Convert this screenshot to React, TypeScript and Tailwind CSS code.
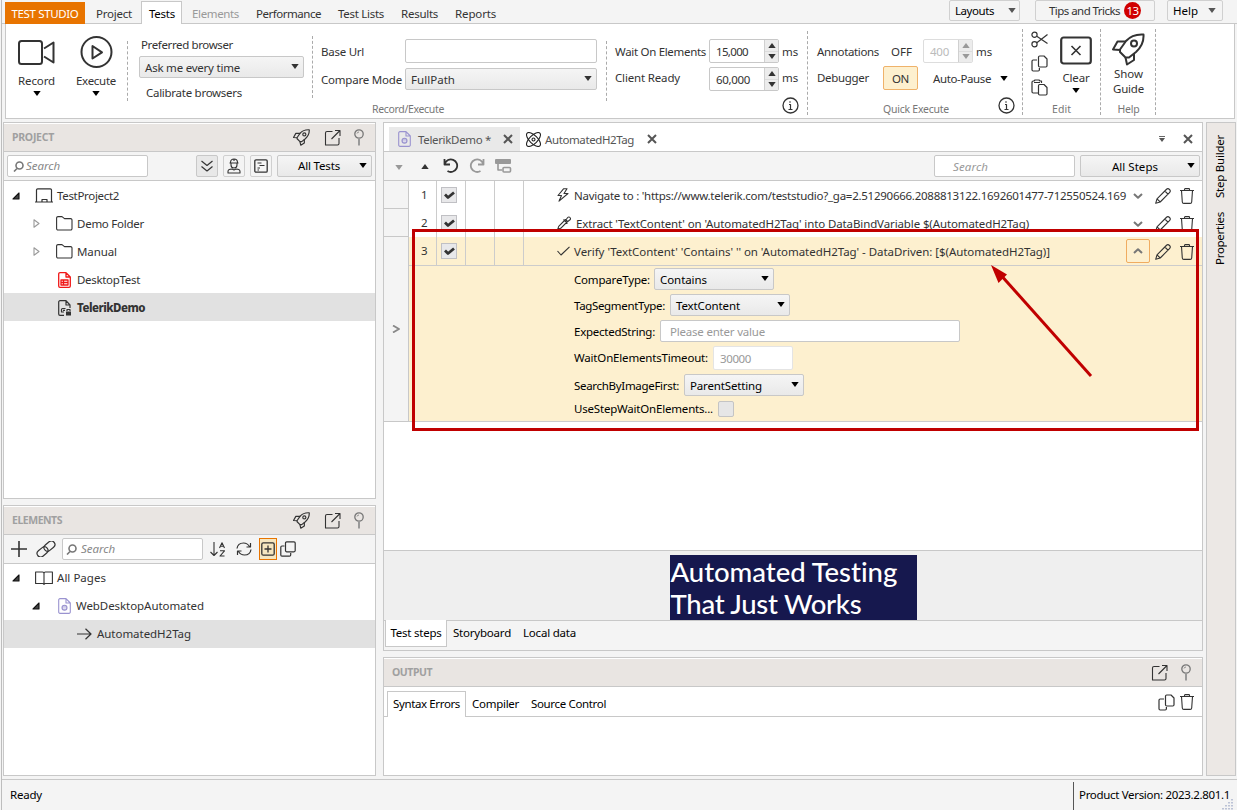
import React from 'react';

const ctx = document.createElement('canvas').getContext('2d')!;

type LabelProps = {
  children: string;
  w: number;
  size?: number;
  weight?: number;
  italic?: boolean;
  family?: string;
  className?: string;
};

// One line of text, tracked so that it fills w pixels
const T: React.FC<LabelProps> = ({ children, w, size = 11.5, weight = 400, italic = false, family = 'Noto Sans', className = '' }) => {
  const fontFamily = `"${family}", "Open Sans", sans-serif`;
  ctx.font = `${italic ? 'italic ' : ''}${weight} ${size}px ${fontFamily}`;
  const letterSpacing = (w + 1 - ctx.measureText(children).width) / children.length;
  return (
    <span
      className={`block shrink-0 whitespace-pre leading-4 ${className}`}
      style={{ fontFamily, fontSize: size, fontWeight: weight, fontStyle: italic ? 'italic' : 'normal', letterSpacing }}
    >
      {children}
    </span>
  );
};

type SvgProps = { w?: number; h?: number; vb?: string; sw?: number; className?: string; children: React.ReactNode };

const Svg: React.FC<SvgProps> = ({ w = 16, h = 16, vb, sw = 1.1, className = '', children }) => (
  <svg
    width={w}
    height={h}
    viewBox={vb ?? `0 0 ${w} ${h}`}
    fill="none"
    stroke="currentColor"
    strokeWidth={sw}
    strokeLinejoin="round"
    className={`block shrink-0 ${className}`}
  >
    {children}
  </svg>
);

const Down = ({ className = '' }) => (
  <Svg w={8} h={5} className={className}>
    <path d="M0.3 0h7.4L4 5Z" fill="currentColor" stroke="none" />
  </Svg>
);

const Up = ({ className = '' }) => (
  <Svg w={8} h={5} className={className}>
    <path d="M0.3 5h7.4L4 0Z" fill="currentColor" stroke="none" />
  </Svg>
);

const Rocket = ({ size = 16, sw = 2.3, className = '' }) => (
  <Svg w={size} h={size} vb="0 0 33 33" sw={sw} className={className}>
    <path d="M31.5 1.5C24 1 18 3.5 14 8L8 16.5V19l5.5 5.5H17l7-5.5C29.5 14 32 9 31.5 1.5Z" />
    <path d="M14 8.5H5.500L1 16.500l7 .5M13.500 24.500l1.500 7 7-4.500v-7" />
    <circle cx="22" cy="10.500" r="3" />
  </Svg>
);

const Popout = () => (
  <Svg w={17} h={17} sw={1.1}>
    <path d="M8.500 2.500H3a1.500 1.500 0 0 0-1.500 1.500v12h12a1.500 1.500 0 0 0 1.500-1.500V9M7.500 10l8.500-8.500M11 1.500h5v5.500" />
  </Svg>
);

const Pin = () => (
  <Svg w={10} h={17} className="text-[#777]">
    <circle cx="5" cy="5" r="4.200" strokeWidth="1.300" />
    <path d="M5 9.500V16.500" stroke="#999" strokeWidth="2" />
    <path d="M3 4.500a2 2 0 0 1 2-1.500" strokeWidth=".8" />
  </Svg>
);

const Magnifier = () => (
  <Svg w={11} h={11} sw={1.6} className="text-[#777]">
    <circle cx="6.500" cy="4.500" r="3.500" />
    <path d="M4 7.500L1 10.500" />
  </Svg>
);

const Folder = () => (
  <Svg w={17} h={15} sw={1.1}>
    <path d="M.6 3V2A1.400 1.400 0 0 1 2 .6h4l2.500 2h6A1.400 1.400 0 0 1 16 4v8.500A1.400 1.400 0 0 1 14.600 14H2A1.400 1.400 0 0 1 .6 12.500Z" />
  </Svg>
);

const PageIcon = ({ className = '' }) => (
  <Svg w={13} h={16} sw={1.1} className={className}>
    <path d="M8 .6H2A1.300 1.300 0 0 0 .7 2v12A1.300 1.300 0 0 0 2 15.400h9A1.300 1.300 0 0 0 12.300 14V5L8 .6V5h4" />
    <circle cx="6.500" cy="9.700" r="2.500" fill="currentColor" fillOpacity=".6" />
    <path d="M5 9.200h3M5 10.500h3" stroke="#fff" strokeWidth=".5" />
  </Svg>
);

const Pencil = () => (
  <Svg sw={1.1}>
    <path d="M.7 15.300L2 10.800 11.300 1.500a2.200 2.200 0 0 1 3.200 3.200L5.200 14ZM2 10.800L5.200 14M9.800 3L13 6.200" />
  </Svg>
);

const Trash = () => (
  <Svg w={14} h={16} sw={1.1}>
    <path d="M0 2.500h14M4.500 2.500V1.300Q4.500.6 5.200.6h3.600q.7 0 .7.7v1.200M1.500 2.500L2.300 14q.1 1.400 1.500 1.400h6.400q1.400 0 1.500-1.400l.8-11.500" />
  </Svg>
);

const Copy = () => (
  <Svg w={17} h={17} sw={1.2}>
    <path d="M6 5H2.200A1.200 1.200 0 0 0 1 6.200v8.600A1.200 1.200 0 0 0 2.200 16h5A1.200 1.200 0 0 0 8.400 14.800V13" />
    <path d="M8.700 1H13l3 3v6.800a1.200 1.200 0 0 1-1.200 1.200H8.700a1.200 1.200 0 0 1-1.200-1.200V2.200A1.200 1.200 0 0 1 8.700 1Z" />
  </Svg>
);

const Info = () => (
  <Svg w={17} h={17} sw={1.3}>
    <circle cx="8.500" cy="8.500" r="7.500" />
    <path d="M7 7.500h1.500v5M6.500 12.500h4M8 4.200v1.500" strokeWidth="1.200" />
  </Svg>
);

const Cross = () => (
  <Svg w={10} h={10} sw={2} className="text-[#555]">
    <path d="M1 1l8 8M9 1L1 9" />
  </Svg>
);

const Check = () => (
  <span className="flex h-4 w-4 shrink-0 items-center justify-center border border-[#c0c0c4] bg-[#e8e8ea] text-[#333]">
    <Svg w={11} h={9} sw={2.8}>
      <path d="M1 3.500l3 3L10 1.500" />
    </Svg>
  </span>
);

const Dashes = ({ className = '' }) => <div className={`w-px shrink-0 border-l border-dashed border-[#aaa] ${className}`} />;

const Collapse = () => (
  <Svg w={8} h={8}>
    <path d="M7 1v6H1Z" fill="#444" stroke="#111" />
  </Svg>
);

const Expand = () => (
  <Svg w={7} h={9} className="text-[#999]">
    <path d="M1 .8v7.400L6 4.500Z" />
  </Svg>
);

const Select = ({ text, w, className = '' }: { text: string; w: number; className?: string }) => (
  <div
    className={`flex h-[22px] shrink-0 items-center justify-between rounded-xs border border-[#c8c8c8] bg-linear-to-b from-[#f5f5f5] to-[#e9e9e9] pl-[5px] pr-1 ${className}`}
  >
    <T w={w} className="mt-px">{text}</T>
    <Down className="mb-px" />
  </div>
);

const Spinner = ({ value, w, className = '', dim = false }: { value: string; w: number; className?: string; dim?: boolean }) => (
  <div className={`flex h-6 shrink-0 items-center rounded-xs border bg-white ${dim ? 'border-[#ddd] text-[#bbb]' : 'border-[#c8c8c8]'} ${className}`}>
    <T w={w} className="ml-[6px] mt-0.5">{value}</T>
    <div className={`ml-auto flex h-full w-[14px] flex-col items-center justify-evenly border-l border-[#d0d0d0] bg-[#ececec] ${dim ? 'text-[#999]' : ''}`}>
      <Up />
      <span className="h-px w-full bg-[#dcdcdc]" />
      <Down />
    </div>
  </div>
);

const PanelHeader = ({ title, w, rocket = true }: { title: string; w: number; rocket?: boolean }) => (
  <div className="flex h-[29px] shrink-0 items-center border-b border-[#c8c8c8] bg-[#e9e5e2] pl-2 pr-[11px] text-[#333] shadow-[inset_0_1px_0_#fff]">
    <T w={w} size={10.5} weight={700} className="text-[#a0a0a0]">{title}</T>
    <div className="ml-auto flex items-center">
      {rocket && <Rocket size={17} className="mr-[14px]" />}
      <Popout />
      <span className="w-[13px]" />
      <Pin />
    </div>
  </div>
);

const Ribbon = () => (
  <div className="ml-[3px] mr-[2px] flex h-[95px] shrink-0 border border-[#c8c8c8] border-t-0 bg-white pt-px text-[#333]">
    {/* Record / Execute */}
    <div className="flex w-[121px] shrink-0 pt-[11px]">
      <div className="flex w-[61px] flex-col items-center">
        <Svg w={37} h={32} sw={2}>
          <rect x="1" y="5" width="23" height="23" rx="2.500" />
          <path d="M26 12.500L35.500 6.500v20L26 20.500" />
        </Svg>
        <T w={36} className="mt-[5px]">Record</T>
        <Down className="mt-0.5 text-black" />
      </div>
      <div className="flex w-[58px] flex-col items-center">
        <Svg w={33} h={32} sw={2}>
          <circle cx="16.500" cy="16" r="15" />
          <path d="M12.500 10v12.500l9.500-6.200Z" />
        </Svg>
        <T w={39} className="mt-[5px]">Execute</T>
        <Down className="mt-0.5 text-black" />
      </div>
    </div>
    <Dashes className="mt-4 h-[60px]" />

    {/* Browser */}
    <div className="w-[184px] shrink-0 pl-[11px] pt-3">
      <T w={91} className="ml-0.5">Preferred browser</T>
      <Select text="Ask me every time" w={94} className="mt-[3px] w-[165px]" />
      <T w={95} className="ml-[7px] mt-[7px]">Calibrate browsers</T>
    </div>
    <Dashes className="mt-[11px] h-[62px]" />

    <div className="w-[293px] shrink-0 pl-2 pt-[14px]">
      <div className="flex h-6 items-center">
        <T w={42} className="mt-0.5">Base Url</T>
        <div className="ml-[41px] h-6 w-[192px] rounded-xs border border-[#c8c8c8]" />
      </div>
      <div className="mt-[5px] flex h-[22px] items-center">
        <T w={80} className="mt-0.5">Compare Mode</T>
        <Select text="FullPath" w={43} className="ml-[3px] w-[192px]" />
      </div>
      <T w={71} size={10.5} className="ml-[51px] mt-[11px] text-[#777]">Record/Execute</T>
    </div>
    <Dashes className="mt-4 h-[60px]" />

    {/* Timeouts */}
    <div className="w-[200px] shrink-0 pl-2 pt-[14px]">
      <div className="flex h-6 items-center">
        <T w={90} className="mt-0.5">Wait On Elements</T>
        <Spinner value="15,000" w={31} className="ml-[3px] w-[70px]" />
        <T w={15} className="ml-[3px] mt-0.5">ms</T>
      </div>
      <div className="mt-1 flex h-6 items-center">
        <T w={64} className="-mt-0.5">Client Ready</T>
        <Spinner value="60,000" w={33} className="ml-[29px] w-[70px]" />
        <T w={15} className="-mt-0.5 ml-[3px]">ms</T>
      </div>
      <div className="ml-[167px] mt-[6px]">
        <Info />
      </div>
    </div>
    <Dashes className="mt-[6px] h-[84px]" />

    {/* Quick execute */}
    <div className="w-[214px] shrink-0 pl-[9px] pt-[14px]">
      <div className="flex h-6 items-center">
        <T w={61} className="mt-0.5">Annotations</T>
        <T w={20} className="ml-3 mt-0.5">OFF</T>
        <Spinner value="400" w={18} dim className="ml-[11px] w-[50px]" />
        <T w={15} className="ml-[3px] mt-0.5">ms</T>
      </div>
      <div className="mt-[3px] flex h-6 items-center">
        <T w={51}>Debugger</T>
        <div className="ml-[14px] flex h-6 w-[35px] items-center justify-center rounded-xs border border-[#efb26a] bg-[#fdf0cf]">
          <T w={16} className="mt-px">ON</T>
        </div>
        <T w={57} className="ml-[15px] mt-0.5">Auto-Pause</T>
        <Down className="ml-[9px] text-black" />
      </div>
      <div className="mt-[7px] flex">
        <T w={65} size={10.5} className="ml-[66px] mt-1 text-[#777]">Quick Execute</T>
        <div className="ml-[49px]">
          <Info />
        </div>
      </div>
    </div>
    <Dashes className="mt-1 h-[86px]" />

    {/* Edit */}
    <div className="w-[77px] shrink-0 pt-[6px]">
      <div className="flex h-[70px]">
        <div className="ml-2 flex w-[17px] flex-col gap-[7px]">
          <Svg w={17} h={17} sw={1.2}>
            <circle cx="3.500" cy="3.800" r="2.600" />
            <circle cx="3.500" cy="13.200" r="2.600" />
            <path d="M5.800 5.200L16.500 12.500M5.800 11.800L16.500 3.500" />
          </Svg>
          <Copy />
          <Svg w={17} h={17} sw={1.2}>
            <path d="M7 14H2.200A1.200 1.200 0 0 1 1 12.800V3.200A1.200 1.200 0 0 1 2.200 2H3l1-1h4l1 1h1.500V4M3 3.500h6M8.700 5.500H13l3 3v6.300a1.200 1.200 0 0 1-1.200 1.200H8.700a1.200 1.200 0 0 1-1.200-1.200V6.700A1.200 1.200 0 0 1 8.700 5.500Z" />
          </Svg>
        </div>
        <div className="ml-3 flex w-8 flex-col items-center pt-[5px]">
          <Svg w={32} h={29} sw={2.2}>
            <rect x="1.200" y="1.500" width="29.600" height="26" rx="2.500" />
            <path d="M11.500 10l9 9M20.500 10l-9 9" strokeWidth="1.600" />
          </Svg>
          <T w={26} className="mt-[5px]">Clear</T>
          <Down className="mt-0.5 text-black" />
        </div>
      </div>
      <T w={18} size={10.5} className="ml-[29px] text-[#777]">Edit</T>
    </div>
    <Dashes className="mt-1 h-[86px]" />

    <div className="flex w-[54px] shrink-0 flex-col items-center pl-px pt-2">
      <Rocket size={33} sw={2} />
      <T w={28}>Show</T>
      <T w={30} className="-mt-px">Guide</T>
      <T w={21} size={10.5} className="mt-1 text-[#777]">Help</T>
    </div>
    <Dashes className="mt-1 h-[86px]" />
  </div>
);

const TopBar = () => (
  <div className="flex h-6 shrink-0 border-b border-[#c8c8c8] pl-[3px] text-[#333]">
    <div className="mt-0.5 flex h-[22px] w-20 items-center justify-center bg-[#e87400] text-white">
      <T w={66} className="mt-px">TEST STUDIO</T>
    </div>
    <T w={35} className="ml-[11px] mt-[6px]">Project</T>
    <div className="ml-[9px] mt-px flex h-6 w-[41px] justify-center border border-b-0 border-[#c8c8c8] bg-white pl-px">
      <T w={25} className="mt-1 text-black">Tests</T>
    </div>
    <T w={46} className="ml-[10px] mt-[6px] text-[#999]">Elements</T>
    <T w={64} className="ml-[17px] mt-[6px]">Performance</T>
    <T w={45} className="ml-[17px] mt-[6px]">Test Lists</T>
    <T w={36} className="ml-[17px] mt-[6px]">Results</T>
    <T w={40} className="ml-[17px] mt-[6px]">Reports</T>
    <div className="ml-auto mr-[14px] flex text-black">
      <div className="flex h-[21px] w-[71px] items-center rounded-xs border border-[#d0d0d0] pl-[5px]">
        <T w={38} className="mt-px">Layouts</T>
        <Down className="ml-[14px] text-[#555]" />
      </div>
      <div className="ml-[15px] flex h-[21px] w-[120px] items-center rounded-xs border border-[#d0d0d0] pl-[13px] text-[#333]">
        <T w={70}>Tips and Tricks</T>
        <span className="ml-1 flex h-[17px] w-[17px] items-center justify-center rounded-full bg-[#d00000] text-white">
          <T w={11} className="mt-px">13</T>
        </span>
      </div>
      <div className="ml-3 flex h-[21px] w-14 items-center rounded-xs border border-[#d0d0d0] pl-[5px]">
        <T w={24} className="mt-px">Help</T>
        <Down className="ml-[10px] text-[#555]" />
      </div>
    </div>
  </div>
);

const ProjectPanel = () => (
  <div className="flex h-[377px] flex-col border border-[#c8c8c8] bg-white text-[#333]">
    <PanelHeader title="PROJECT" w={41} />
    <div className="flex h-[29px] shrink-0 items-center border-b border-[#c8c8c8] bg-[#f4f4f4] pl-[3px] pr-[3px]">
      <div className="flex h-[22px] w-[141px] items-center rounded-xs border border-[#c8c8c8] bg-white pl-[5px]">
        <Magnifier />
        <T w={33} italic className="ml-[2px] text-[#888]">Search</T>
      </div>
      <div className="ml-auto flex gap-[5px]">
        <div className="flex h-[22px] w-[22px] items-center justify-center rounded-xs border border-[#c8c8c8] bg-[#e8e8e8]">
          <Svg w={12} h={12} sw={1.2}>
            <path d="M0.500 1L6 5.500 11.500 1M.5 6.500L6 11l5.500-4.500" />
          </Svg>
        </div>
        <div className="flex h-[22px] w-[22px] items-center justify-center rounded-xs border border-[#d0d0d0]">
          <Svg w={14} h={16}>
            <path d="M2.500 5h9M3.500 4.500C3.500 2.500 5 1 7 1s3.500 1.500 3.500 3.500M7 1v2M4 5.500v1.500a3 3 0 0 0 6 0V5.500M1 15v-1.500C1 11.500 3 11 5 11l2 1 2-1c2 0 4 .5 4 2.500V15Z" />
          </Svg>
        </div>
        <div className="flex h-[22px] w-[22px] items-center justify-center rounded-xs border border-[#d0d0d0]">
          <Svg w={14} h={14} sw={1.3}>
            <rect x=".8" y=".8" width="12.400" height="12.400" rx="1.200" />
            <path d="M3.500 4h4M5.500 6.500h5M3.500 9h2.500M3.500 11h1.500" strokeWidth="1" />
          </Svg>
        </div>
        <div className="flex h-[22px] w-[95px] items-center rounded-xs border border-[#c8c8c8] bg-linear-to-b from-[#f5f5f5] to-[#e9e9e9] pl-5 text-black">
          <T w={41}>All Tests</T>
          <Down className="mb-0.5 ml-[19px]" />
        </div>
      </div>
    </div>
    <div className="flex h-7 items-center pl-2 pt-px">
      <Collapse />
      <Svg w={18} h={15} className="ml-[15px]" sw={1.2}>
        <path d="M0 14h18M1.500 14V2Q1.500.8 2.700.8h12.600q1.200 0 1.200 1.200v12M7 14v-2.500h5V14" />
      </Svg>
      <T w={61} className="ml-[4px]">TestProject2</T>
    </div>
    {[['Demo Folder', 66], ['Manual', 39]].map(([name, w]) => (
      <div key={name} className="flex h-7 items-center pl-[29px] pt-px">
        <Expand />
        <span className="w-4" />
        <Folder />
        <T w={w as number} className="ml-1">{name as string}</T>
      </div>
    ))}
    <div className="flex h-7 items-center pl-[54px] pt-px">
      <Svg w={13} h={16} sw={1.3} className="text-[#f01818]">
        <path d="M8 .7H2A1.300 1.300 0 0 0 .7 2v12A1.300 1.300 0 0 0 2 15.300h9A1.300 1.300 0 0 0 12.300 14V5L8 .7V5h4M3 8h7v5H3ZM3 10.500h7M5.500 8v5" />
      </Svg>
      <T w={62} className="ml-[6px]">DesktopTest</T>
    </div>
    <div className="flex h-7 items-center bg-[#e1e1e1] pl-[54px] pt-px">
      <Svg w={13} h={16} sw={1.2}>
        <path d="M6 15.300H2A1.300 1.300 0 0 1 .7 14V2A1.300 1.300 0 0 1 2 .7h6L12 5v3M8 .7V5h4M7.500 8.500H4.500a1 1 0 0 0-1 1V12h2.500M5 10.300h2" />
        <rect x="8" y="11.500" width="5" height="4" fill="currentColor" stroke="none" />
        <path d="M9 11V9.500h3V11" />
      </Svg>
      <T w={67} weight={800} className="ml-[6px]">TelerikDemo</T>
    </div>
  </div>
);

const ElementsPanel = () => (
  <div className="mt-[6px] flex h-[271px] flex-col border border-[#c8c8c8] bg-white text-[#333]">
    <PanelHeader title="ELEMENTS" w={49} />
    <div className="flex h-[29px] shrink-0 items-center border-b border-[#c8c8c8] bg-[#f4f4f4] pl-[7px]">
      <Svg sw={1.6}>
        <path d="M8 0v16M0 8h16" />
      </Svg>
      <Svg w={20} h={16} className="ml-[9px]" sw={1.2}>
        <g transform="rotate(-40 10 8)">
          <rect x="-.5" y="4.500" width="12" height="7" rx="3.500" />
          <rect x="8.500" y="4.500" width="12" height="7" rx="3.500" />
        </g>
      </Svg>
      <div className="ml-[6px] flex h-[22px] w-[141px] items-center rounded-xs border border-[#c8c8c8] bg-white pl-[3px]">
        <Magnifier />
        <T w={33} italic className="ml-1 text-[#888]">Search</T>
      </div>
      <Svg w={16} h={15} className="ml-[7px]">
        <path d="M4 0v13.500M.5 10L4 13.500 7.500 10" />
        <path d="M9.500 6L12 .8 14.500 6M10.300 4.300h3.400M10 8.800h4.500L10 14h4.500" />
      </Svg>
      <Svg w={16} h={14} className="ml-[10px]" sw={1.2}>
        <path d="M1 6.500C1.500 3 4 1 7.500 1c2.500 0 4.500 1 6 3.500M14.500 1v4h-4M15 7.500C14.500 11 12 13 8.500 13c-2.500 0-4.500-1-6-3.500M1.500 13V9h4" />
      </Svg>
      <div className="ml-[7px] flex h-[22px] w-[18px] items-center justify-center border border-[#e87400] bg-[#f5e6c0]">
        <Svg w={14} h={14} sw={1.3}>
          <rect x=".8" y=".8" width="12.400" height="12.400" rx="1.500" />
          <path d="M7 3.500v7M3.500 7h7" strokeWidth="1.300" />
        </Svg>
      </div>
      <Svg className="ml-[3px]" sw={1.2}>
        <path d="M4.500 5H2A1.200 1.200 0 0 0 .8 6.200V14A1.200 1.200 0 0 0 2 15.200h7.500a1.200 1.200 0 0 0 1.200-1.200V12" />
        <rect x="5.500" y=".8" width="9.700" height="10" rx="1.200" />
      </Svg>
    </div>
    <div className="flex h-7 items-center pl-2">
      <Collapse />
      <Svg w={18} h={14} className="ml-[15px]">
        <path d="M9 2.500Q9 1 7.500 1H.6v11.500h7Q9 12.500 9 13.500q0-1 1.400-1h7V1h-7Q9 1 9 2.500v11" />
      </Svg>
      <T w={48} className="ml-[4px]">All Pages</T>
    </div>
    <div className="flex h-7 items-center pl-7">
      <Collapse />
      <PageIcon className="ml-[18px] text-[#9a93d0]" />
      <T w={127} className="ml-[5px]">WebDesktopAutomated</T>
    </div>
    <div className="flex h-7 items-center bg-[#e1e1e1] pl-[73px]">
      <Svg w={15} h={12} sw={1.2}>
        <path d="M0 6h14M8.500.7L14 6l-5.500 5.300" />
      </Svg>
      <T w={93} className="ml-[5px]">AutomatedH2Tag</T>
    </div>
  </div>
);

const StepCells = ({ n }: { n: string }) => (
  <>
    <div className="flex h-full w-7 shrink-0 items-center border-r border-[#ccc] pl-3">
      <T w={7}>{n}</T>
    </div>
    <div className="flex h-full w-[29px] shrink-0 items-center border-r border-[#ccc] pl-1">
      <Check />
    </div>
    <div className="h-full w-[29px] shrink-0 border-r border-[#ccc]" />
    <div className="h-full w-[29px] shrink-0 border-r border-[#ccc]" />
  </>
);

const StepActions = ({ open = false }) => (
  <div className="ml-auto flex items-center pr-2 pt-px">
    <div className={`flex h-6 w-6 items-center justify-center text-[#777] ${open ? '-mt-0.5 rounded-xs border border-[#f0ac60]' : ''}`}>
      <Svg w={10} h={6} sw={2}>
        <path d={open ? 'M1 5L5 1.200 9 5' : 'M1 1l4 3.800L9 1'} />
      </Svg>
    </div>
    <span className="w-[5px]" />
    <Pencil />
    <span className="w-[9px]" />
    <Trash />
  </div>
);

const Field = ({ label, w, box, children, className = 'mt-1' }: { label: string; w: number; box: string; children: React.ReactNode; className?: string }) => (
  <div className={`flex items-center ${className}`}>
    <div className={`shrink-0 ${box}`}>
      <T w={w}>{label}</T>
    </div>
    {children}
  </div>
);

const StepsArea = () => (
  <div className="flex h-[369px] shrink-0">
    <div className="flex w-[25px] shrink-0 flex-col">
      <div className="h-7 shrink-0 border-b border-r border-[#c8c8c8] bg-[#f4f4f4]" />
      <div className="h-7 shrink-0 border-b border-r border-[#c8c8c8] bg-[#f4f4f4]" />
      <div className="flex h-[185px] shrink-0 items-center justify-center border-b border-r border-[#c8c8c8] bg-[#f4f4f4] text-[#888]">
        <Svg w={8} h={8} sw={1.8}>
          <path d="M1 .5l6 3.500L1 7.500" />
        </Svg>
      </div>
    </div>
    <div className="flex min-w-0 flex-1 flex-col">
      <div className="flex h-7 items-center text-[#333]">
        <StepCells n="1" />
        <Svg w={12} h={14} className="ml-[33px]">
          <path d="M6.500.8L1 7.500h3.500L2 13.200 11 5.500H7L10 .8Z" />
        </Svg>
        <T w={551} className="ml-[5px] mt-0.5">Navigate to : 'https://www.telerik.com/teststudio?_ga=2.51290666.2088813122.1692601477-712550524.169</T>
        <StepActions />
      </div>
      <div className="flex h-7 items-center text-[#333]">
        <StepCells n="2" />
        <Svg w={14} h={14} className="ml-[33px]">
          <path d="M.7 13.300l1-3L8.500 3.500l2 2L3.700 12.300ZM6.500 3.500l4 4M8.500 4.500l2.200-3a1.500 1.500 0 0 1 2.300 0 1.700 1.700 0 0 1 0 2.300L9.500 6.500" />
        </Svg>
        <T w={452} className="ml-[5px] mt-0.5">Extract 'TextContent' on 'AutomatedH2Tag' into DataBindVariable $(AutomatedH2Tag)</T>
        <StepActions />
      </div>
      <div className="flex h-[29px] items-center border-b border-[#ccc] bg-[#fdf0cf] text-[#333]">
        <StepCells n="3" />
        <Svg w={13} h={10} className="ml-[33px]">
          <path d="M.5 5L4 9 12.500.8" />
        </Svg>
        <T w={475} className="ml-1 mt-0.5">Verify 'TextContent' 'Contains' '' on 'AutomatedH2Tag' - DataDriven: [$(AutomatedH2Tag)]</T>
        <StepActions open />
      </div>
      <div className="h-[156px] border-b border-[#ccc] bg-[#fdf0cf] pl-[165px] pt-0.5 text-black">
        <Field label="CompareType:" w={75} box="w-20 pt-0.5" className="">
          <Select text="Contains" w={46} className="w-[120px]" />
        </Field>
        <Field label="TagSegmentType:" w={90} box="w-24 pt-0.5">
          <Select text="TextContent" w={63} className="w-[120px]" />
        </Field>
        <Field label="ExpectedString:" w={80} box="w-[86px] pt-0.5">
          <div className="flex h-[22px] w-[300px] items-center rounded-xs border border-[#c8c8c8] bg-white pl-[9px] text-[#999]">
            <T w={94} className="mt-0.5">Please enter value</T>
          </div>
        </Field>
        <Field label="WaitOnElementsTimeout:" w={133} box="w-[139px]">
          <div className="flex h-6 w-20 items-center rounded-xs border border-[#e4e4e4] bg-white pl-[6px] text-[#999]">
            <T w={30} className="mt-0.5">30000</T>
          </div>
        </Field>
        <Field label="SearchByImageFirst:" w={104} box="w-[110px] pt-px">
          <Select text="ParentSetting" w={71} className="w-[120px]" />
        </Field>
        <Field label="UseStepWaitOnElements..." w={138} box="w-36" className="mt-[5px]">
          <div className="h-4 w-4 rounded-xs border border-[#c4c4c4] bg-[#e6e6e6]" />
        </Field>
      </div>
    </div>
  </div>
);

const MainPanel = () => (
  <div className="relative flex h-[529px] flex-col border border-[#c8c8c8] bg-white">
    <div className="flex h-[29px] shrink-0 border-b border-[#c8c8c8] pl-[5px] pt-1 text-[#555]">
      <div className="flex h-6 w-[131px] items-center bg-[#e9e9e9] pl-[9px]">
        <PageIcon className="text-[#9a93d0]" />
        <T w={72} className="ml-[7px] mt-px">TelerikDemo *</T>
        <span className="w-3" />
        <Cross />
      </div>
      <div className="flex h-6 flex-1 items-center pl-[6px] pr-[9px]">
        <Svg w={15} h={15} className="text-[#222]">
          <ellipse cx="7.500" cy="7.500" rx="9" ry="4" transform="rotate(45 7.500 7.500)" />
          <ellipse cx="7.500" cy="7.500" rx="9" ry="4" transform="rotate(-45 7.500 7.500)" />
          <circle cx="7.500" cy="7.500" r="1.500" />
        </Svg>
        <T w={88} className="ml-1 mt-px">AutomatedH2Tag</T>
        <span className="w-[13px]" />
        <Cross />
        <div className="ml-auto mr-[18px] flex flex-col items-center gap-px text-[#555]">
          <span className="h-px w-[6px] bg-[#666]" />
          <Svg w={6} h={4}>
            <path d="M0 0h6L3 4Z" fill="currentColor" stroke="none" />
          </Svg>
        </div>
        <Cross />
      </div>
    </div>
    <div className="flex h-[29px] shrink-0 items-center border-b border-[#c8c8c8] bg-[#f4f4f4] pl-[11px] pr-0.5 text-[#333]">
      <Down className="mt-0.5 text-[#999]" />
      <Up className="ml-[18px]" />
      <Svg className="ml-[14px]" sw={1.8}>
        <path d="M1.500 1v5.500h5.500M1.800 6A6.300 6.300 0 1 1 4.500 13" />
      </Svg>
      <Svg className="ml-[10px] text-[#999]" sw={1.8}>
        <path d="M14.500 1v5.500H9M14.200 6A6.300 6.300 0 1 0 11.500 13" />
      </Svg>
      <Svg w={17} h={14} className="ml-[10px] text-[#999]" sw={1.6}>
        <rect x="0" y="0" width="16" height="5" rx="1" fill="currentColor" stroke="none" />
        <path d="M3 5v6h4" />
        <rect x="8" y="8.500" width="7.500" height="4.500" rx="1" />
      </Svg>
      <div className="ml-auto flex h-[22px] w-[141px] items-center rounded-xs border border-[#c8c8c8] bg-white pl-[18px] text-[#999]">
        <T w={34} italic className="mt-0.5">Search</T>
      </div>
      <div className="ml-[5px] flex h-[22px] w-[120px] items-center rounded-xs border border-[#c8c8c8] bg-linear-to-b from-[#f5f5f5] to-[#e9e9e9] pl-[31px] text-black">
        <T w={45} className="mt-0.5">All Steps</T>
        <Down className="mb-0.5 ml-auto mr-1" />
      </div>
    </div>
    <StepsArea />
    <div className="flex h-[71px] shrink-0 items-end justify-center border-b border-t border-[#c8c8c8] bg-[#efefef]">
      <div className="h-[65px] w-[247px] bg-[#16184e] pl-px text-white">
        <T w={227} size={27.5} weight={500} family="Lato" className="leading-[33px]!">Automated Testing</T>
        <T w={191} size={27.5} weight={500} family="Lato" className="leading-[32px]!">That Just Works</T>
      </div>
    </div>
    <div className="flex flex-1 items-start bg-[#f4f4f4] pl-px text-black">
      <div className="-mt-px flex h-[27px] w-[62px] items-center justify-center border border-t-0 border-[#c8c8c8] bg-white">
        <T w={50}>Test steps</T>
      </div>
      <T w={57} className="ml-[6px] mt-1">Storyboard</T>
      <T w={52} className="ml-[12px] mt-1">Local data</T>
    </div>

    {/* Callout frame and arrow */}
    <div className="absolute left-[28px] top-[106px] h-[202px] w-[787px] border-3 border-[#c00000]" />
    <svg width="110" height="120" className="absolute left-[603px] top-[138px]">
      <path d="M104 115L12 12" stroke="#c00000" strokeWidth="3" fill="none" />
      <path d="M4 4L20 13.500L11.500 22Z" fill="#c00000" />
    </svg>
  </div>
);

const OutputPanel = () => (
  <div className="mt-[6px] flex h-[119px] flex-col border border-[#c8c8c8] bg-white text-black">
    <PanelHeader title="OUTPUT" w={39} rocket={false} />
    <div className="flex h-[30px] shrink-0 border-b border-[#c8c8c8] pl-[3px] pt-[4px]">
      <div className="flex h-[26px] w-[79px] shrink-0 justify-center border border-b-0 border-[#c8c8c8] bg-white pt-1">
        <T w={66}>Syntax Errors</T>
      </div>
      <T w={46} className="ml-[6px] mt-[5px]">Compiler</T>
      <T w={74} className="ml-[12px] mt-[5px]">Source Control</T>
      <div className="ml-auto flex gap-[5px] pr-2 pt-[3px] text-[#333]">
        <Copy />
        <Trash />
      </div>
    </div>
  </div>
);

export default function App() {
  return (
    <div className="h-[810px] w-[1237px] overflow-hidden bg-[#f4f4f4] pl-px font-['Noto_Sans','Open_Sans',sans-serif]">
      <div className="flex h-full flex-col border-l border-[#bdbdbd]">
        <TopBar />
        <Ribbon />
        <div className="mt-[3px] flex h-[654px] shrink-0 pl-px">
          <div className="w-[373px] shrink-0">
            <ProjectPanel />
            <ElementsPanel />
          </div>
          <div className="ml-[7px] w-[820px] shrink-0">
            <MainPanel />
            <OutputPanel />
          </div>
          <div className="ml-[3px] flex w-[30px] shrink-0 flex-col items-center gap-[14px] border border-[#c8c8c8] bg-[#ece8e5] pr-[3px] pt-3 text-black">
            <div className="rotate-180 [writing-mode:vertical-rl]">
              <T w={62}>Step Builder</T>
            </div>
            <div className="rotate-180 [writing-mode:vertical-rl]">
              <T w={52}>Properties</T>
            </div>
          </div>
        </div>
        <div className="mt-[3px] flex flex-1 items-end border-t border-[#c8c8c8] pl-2 text-black">
          <T w={31} className="mb-[7px]">Ready</T>
          <div className="relative ml-auto flex h-7 w-[164px] items-center border-l border-[#555] pb-0.5 pl-[5px]">
            <T w={150}>Product Version: 2023.2.801.1</T>
            <Svg w={12} h={12} className="absolute bottom-0 right-1 text-[#a9b2cc]">
              <path d="M11 1v11M8 4v8M5 7v5M2 10v2" strokeDasharray="1.500 1.500" strokeWidth="1.500" />
            </Svg>
          </div>
        </div>
      </div>
    </div>
  );
}
